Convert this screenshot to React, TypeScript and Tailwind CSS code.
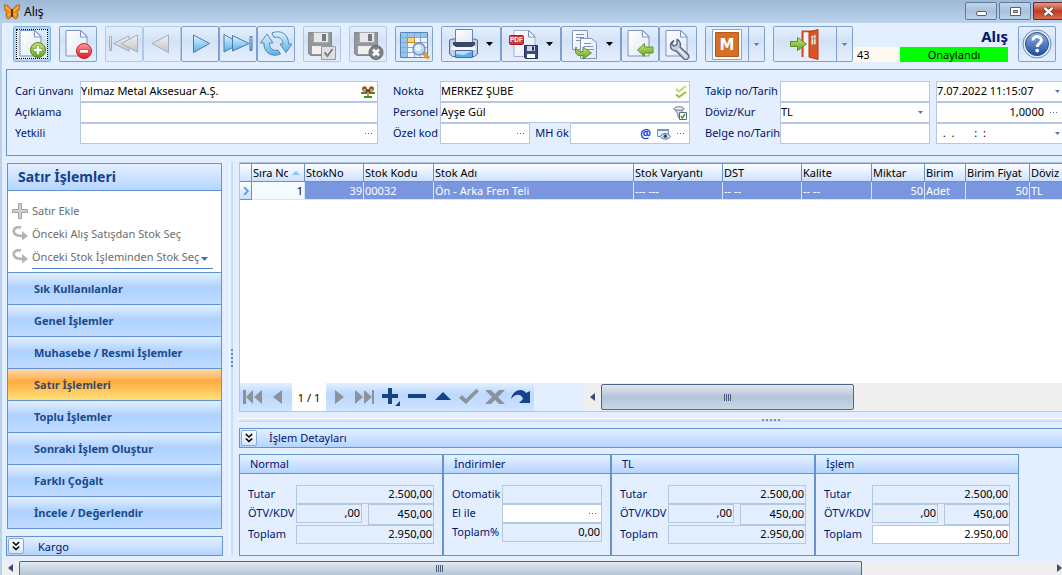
import type { ReactNode } from "react";

import clsx from "clsx";

/* ---------- toolbar icons ---------- */

function Gradients() {
  return (
    <svg aria-hidden="true" className="absolute size-0">
      <defs>
        <linearGradient id="paper" x1="0" x2="1" y1="0" y2="1">
          <stop offset="0" stopColor="#ffffff" />
          <stop offset="1" stopColor="#dfe8f5" />
        </linearGradient>
        <linearGradient id="blue" x1="0" x2="0" y1="0" y2="1">
          <stop offset="0" stopColor="#e4f4fd" />
          <stop offset="1" stopColor="#58b0e4" />
        </linearGradient>
        <linearGradient id="gray" x1="0" x2="0" y1="0" y2="1">
          <stop offset="0" stopColor="#f1f2f4" />
          <stop offset="1" stopColor="#c0c4ca" />
        </linearGradient>
        <linearGradient id="green" x1="0" x2="0" y1="0" y2="1">
          <stop offset="0" stopColor="#c8e878" />
          <stop offset="1" stopColor="#5fa31c" />
        </linearGradient>
        <linearGradient id="red" x1="0" x2="0" y1="0" y2="1">
          <stop offset="0" stopColor="#ff9a9a" />
          <stop offset="1" stopColor="#e01818" />
        </linearGradient>
        <linearGradient id="help" x1="0" x2="0" y1="0" y2="1">
          <stop offset="0" stopColor="#8fb4e6" />
          <stop offset="1" stopColor="#1f4c9f" />
        </linearGradient>
      </defs>
    </svg>
  );
}

function Icon({ children }: { children: ReactNode }) {
  return (
    <svg aria-hidden="true" className="size-8 shrink-0" fill="none" viewBox="0 0 32 32">
      {children}
    </svg>
  );
}

function Paper() {
  return (
    <>
      <path d="M4 2.5h15l6 6V28H4z" fill="url(#paper)" stroke="#7d93c4" />
      <path d="M18.5 2.5V9H25z" fill="#fff" stroke="#7d93c4" />
    </>
  );
}

function NewIcon() {
  return (
    <Icon>
      <Paper />
      <circle cx="22" cy="22" fill="url(#green)" r="7.5" stroke="#4d8a1c" />
      <path d="M20.5 17.5h3v3h3v3h-3v3h-3v-3h-3v-3h3z" fill="#fff" stroke="#5a9426" strokeWidth=".6" />
    </Icon>
  );
}

function DeleteIcon() {
  return (
    <Icon>
      <Paper />
      <circle cx="22" cy="23" fill="url(#red)" r="7.5" stroke="#cf1f2b" />
      <path d="M17.5 21.5h9V25h-9z" fill="#fff" stroke="#b8202a" strokeWidth=".6" />
    </Icon>
  );
}

function FirstIcon() {
  return (
    <Icon>
      <g fill="url(#gray)" stroke="#a9adb4">
        <path d="M1.5 8.5h2v14h-2z" />
        <path d="M21 8v15L5.5 15.5z" />
        <path d="M29.5 7v17L13 15.5z" />
      </g>
    </Icon>
  );
}

function PriorIcon() {
  return (
    <Icon>
      <path d="M22.5 7v17.5L6 15.5z" fill="url(#gray)" stroke="#a9adb4" />
    </Icon>
  );
}

function NextIcon() {
  return (
    <Icon>
      <path d="M9.5 7v17.5l16-9z" fill="url(#blue)" stroke="#4a78b4" />
    </Icon>
  );
}

function LastIcon() {
  return (
    <Icon>
      <g fill="url(#blue)" stroke="#4a78b4">
        <path d="M28 8.5h2v14h-2z" />
        <path d="M2 6.500V24l16-8.500z" />
        <path d="M10.5 7.5V23L27 15.5z" />
      </g>
    </Icon>
  );
}

function RefreshIcon() {
  return (
    <Icon>
      <g fill="url(#blue)" stroke="#5787b8">
        <path d="M12 5c9-4 17 2 16.500 11H32l-6 8.500L20 16h3c0-5-4-8-9-6.500z" />
        <path d="M20.500 26C11 30 3.500 24 4 15H.5L7 6l6 9H9.500c-.5 5 3.500 8.500 8.500 7z" />
      </g>
    </Icon>
  );
}

function GrayFloppy() {
  return (
    <>
      <path d="M2.5 4.5h23v23h-21l-2-2z" fill="#94979c" stroke="#85888e" />
      <path d="M7.5 4.5h15v10h-15z" fill="#e6e7e9" stroke="#a5a8ad" />
      <path d="M16 6h4v7h-4z" fill="#75787e" />
      <path d="M6 18h15v8H6z" fill="#f0f0f1" />
    </>
  );
}

function SaveIcon() {
  return (
    <Icon>
      <GrayFloppy />
      <path d="M15.5 18.5h14v13h-14z" fill="#dfe0e2" stroke="#97999d" />
      <path d="M18.500 24.500l3 3.500 5-7" stroke="#7d8086" strokeWidth="2" />
    </Icon>
  );
}

function CancelIcon() {
  return (
    <Icon>
      <GrayFloppy />
      <circle cx="24" cy="24.500" fill="#808287" r="7" stroke="#65686d" />
      <path d="M21 21.500l6 6m0-6l-6 6" stroke="#fff" strokeWidth="2.600" />
    </Icon>
  );
}

function GridSearchIcon() {
  return (
    <Icon>
      <path d="M2.500 4.500h27v25h-27z" fill="#f4f8fd" stroke="#5a83b5" />
      <path d="M3 5h26v4H3zM3 5h6v24H3z" fill="#8fc8ea" />
      <path d="M9.500 5v24M16.500 5v24M22.500 5v24M3 9.500h26M3 14.500h26M3 19.500h26M3 24.500h26" stroke="#8da4cf" />
      <path d="M9.500 9.500h7v5h-7z" fill="#ffd36b" stroke="#c98a1b" />
      <path d="M25 25l6 5.500" stroke="#dd9a36" strokeWidth="3.500" />
      <circle cx="21" cy="21" fill="#b4dcf7" r="6" stroke="#7f8fb8" strokeWidth="1.500" />
      <circle cx="20" cy="20" fill="#e6f5fe" r="3" />
    </Icon>
  );
}

function PrintIcon() {
  return (
    <Icon>
      <path d="M1.500 12l3-1h22l3 1v14l-3 2.500h-22l-3-2.500z" fill="#c3cde3" stroke="#5468a0" />
      <path d="M5 15h21l2 7H3z" fill="#f4f7fc" />
      <path d="M7.500 1.500h17v14h-17z" fill="url(#paper)" stroke="#6f80b4" />
      <path d="M5 14h22v3l-3 2H8l-3-2z" fill="#3c4868" />
      <path d="M7.500 22.500h17v7h-17z" fill="#58aee8" stroke="#5468a0" />
      <path d="M8 23h16l-8 4-8-1z" fill="#b8e0fa" />
    </Icon>
  );
}

function PdfIcon() {
  return (
    <Icon>
      <path d="M6 2.500h15l6 6V28.500H6z" fill="url(#paper)" stroke="#a2b0d0" />
      <path d="M20.500 2.500V9H27z" fill="#fff" stroke="#7d93c4" />
      <rect fill="#d0383c" height="9" rx="1" stroke="#a51d26" width="14" x="1.500" y="7.500" />
      <text fill="#fff" fontFamily="Liberation Sans, sans-serif" fontSize="6.500" fontWeight="700" x="2" y="14.400">
        PDF
      </text>
      <path d="M16.500 17.500h13v13h-12l-1-1z" fill="#3b4a78" stroke="#25325c" />
      <path d="M19 18h8v5h-8z" fill="#c8d4ec" />
      <path d="M24 18.500h2v4h-2z" fill="#25325c" />
      <path d="M19 26h8v4h-8z" fill="#fff" />
    </Icon>
  );
}

function CopyIcon() {
  return (
    <Icon>
      <path d="M4.500 2.500h15v19h-15z" fill="url(#paper)" stroke="#8093c4" />
      <path d="M8 6.500h8M8 9.500h8M8 12.500h5" stroke="#7f92bb" />
      <path d="M12.500 10.500h11l5 4v16h-16z" fill="url(#paper)" stroke="#8093c4" />
      <path d="M16 15.500h7M16 18.500h9M18 21.500h8" stroke="#7f92bb" />
      <path d="M8 19c0 4 3 5 7 4.500V19l8.500 6L15 31v-3.500c-6 1-9-2-7-8.500z" fill="url(#green)" stroke="#5d8f20" />
    </Icon>
  );
}

function ImportIcon() {
  return (
    <Icon>
      <Paper />
      <path d="M13.500 22l7-6.500V19H29v6h-8.500v3.500z" fill="url(#green)" stroke="#5a9426" />
    </Icon>
  );
}

function SettingsIcon() {
  return (
    <Icon>
      <Paper />
      <path
        d="M12 12.500c-5 2.500-5 10 2 10.500l8 8c2.500 2 6-1 4.500-4l-8.500-8c1.500-4-1-7-3-7.500v5l-3 1.500-2.500-2z"
        fill="#c3cddd"
        stroke="#54627f"
        strokeWidth="1.300"
      />
      <path d="M16 20.500l8.500 8.500" stroke="#eff3f8" strokeWidth="1.500" />
    </Icon>
  );
}

function MIcon() {
  return (
    <Icon>
      <path d="M1.500 1.500h29v30h-29z" fill="#fff" stroke="#8ba5d2" />
      <path d="M4.500 4.500h23v24h-23z" fill="#d46f25" stroke="#b5591a" />
      <text fill="#fff" fontFamily="DejaVu Sans, sans-serif" fontSize="15" fontWeight="700" textAnchor="middle" x="16" y="22">
        M
      </text>
    </Icon>
  );
}

function ExitIcon() {
  return (
    <Icon>
      <path d="M13.500 29V3.500H28V29" stroke="#d2471c" strokeWidth="2" />
      <path d="M15 4.500h12V28H15z" fill="#f3f4f8" />
      <path d="M20 4l9-2.500v30L20 29z" fill="#db5227" stroke="#b93a16" />
      <path d="M22 7.500l5-1v10l-5 .5z" fill="#e9e4d2" stroke="#c0613a" strokeWidth=".7" />
      <path d="M24.500 7v9.500M22 11l5-.5" stroke="#a1714f" strokeWidth=".7" />
      <path d="M1.500 13.500h7v-4l9 6.500-9 6.500v-4h-7z" fill="url(#green)" stroke="#5a9426" />
    </Icon>
  );
}

function HelpIcon() {
  return (
    <Icon>
      <circle cx="16" cy="16" fill="#e9f0fa" r="14" stroke="#6d87b5" />
      <circle cx="16" cy="16" fill="url(#help)" r="11.500" stroke="#24508f" />
      <path d="M11.800 12.500c.4-5.500 9-5 8.500.2-.3 2.800-4 2.800-4 6.300" stroke="#fff" strokeWidth="3" />
      <circle cx="16.200" cy="22.600" fill="#fff" r="1.900" />
    </Icon>
  );
}

function ButterflyIcon() {
  return (
    <svg aria-hidden="true" className="size-4" viewBox="0 0 16 16">
      <path d="M8 7C6 2 2 0 0 1c0 4 1 6 3 7-2 2-1 6 1 7 2 0 4-3 4-6z" fill="#f08c1a" stroke="#8a4f14" strokeWidth=".6" />
      <path d="M8 7c2-5 6-7 8-6 0 4-1 6-3 7 2 2 1 6-1 7-2 0-4-3-4-6z" fill="#f08c1a" stroke="#8a4f14" strokeWidth=".6" />
      <path d="M2 3l4 4M14 3l-4 4M4 12l2-3M12 12l-2-3" stroke="#ffc94d" />
      <path d="M8 5v8" stroke="#3a220c" strokeWidth="1.500" />
    </svg>
  );
}

/* ---------- small glyphs ---------- */

function Caret({ className }: { className?: string }) {
  return (
    <svg aria-hidden="true" className={clsx("shrink-0 fill-current", className)} preserveAspectRatio="none" viewBox="0 0 8 4">
      <path d="M0 0h8L4 4z" />
    </svg>
  );
}

function Dots() {
  return (
    <svg aria-hidden="true" className="h-px w-2 fill-[#4a6fae]" viewBox="0 0 8 1">
      <path d="M0 0h1v1H0zM3 0h1v1H3zM6 0h1v1H6z" />
    </svg>
  );
}

function Chevrons() {
  return (
    <svg aria-hidden="true" className="h-2.5 w-2" fill="none" stroke="#000" strokeWidth="1.600" viewBox="0 0 8 10">
      <path d="M.8 1L4 4l3.200-3M.8 5.500L4 8.500l3.200-3" />
    </svg>
  );
}

function PeopleIcon() {
  return (
    <svg aria-hidden="true" className="h-3 w-3.5" viewBox="0 0 14 12">
      <path d="M0 6h5v2H0zM9 6h5v2H9zM3 10h8v2H3z" fill="#3f8f2f" />
      <circle cx="3.500" cy="2.700" fill="#8c5a2c" r="2.500" />
      <circle cx="10.500" cy="2.700" fill="#8c5a2c" r="2.500" />
      <circle cx="7" cy="5.500" fill="#6d421d" r="2.600" />
      <path d="M2 3h3v3H2zM9 3h3v3H9zM6 6h2v4H6z" fill="#c9995e" />
    </svg>
  );
}

function ChecksIcon() {
  return (
    <svg aria-hidden="true" className="h-3.5 w-3" fill="none" strokeWidth="2" viewBox="0 0 12 14">
      <path d="M1 4l3 2.500L11 1" stroke="#b9dc6c" />
      <path d="M1 9.500L4 12l7-5" stroke="#8fc43a" />
    </svg>
  );
}

function FilterCheckIcon() {
  return (
    <svg aria-hidden="true" className="size-3.5" fill="none" viewBox="0 0 14 14">
      <path d="M1 2.500L5 8v3l2 1V8l4-5.500z" fill="#dcdfe6" stroke="#6b7384" />
      <ellipse cx="6" cy="2.500" fill="#f4f5f8" rx="5" ry="1.700" stroke="#6b7384" />
      <path d="M6.500 6.500h7v7h-7z" fill="#fff" stroke="#5a6a8c" />
      <path d="M8 10l1.500 2L12 8" stroke="#3fa12c" strokeWidth="1.500" />
    </svg>
  );
}

function WindowEyeIcon() {
  return (
    <svg aria-hidden="true" className="h-3 w-3.5" fill="none" viewBox="0 0 14 12">
      <path d="M.5 1.500h11v7H.5z" fill="#e8f2fc" stroke="#6d9bc8" />
      <path d="M0 1h12v2H0z" fill="#6d9bc8" />
      <path d="M3 8.500c2.500-4 8-4 10.500 0-2.500 3.500-8 3.500-10.500 0z" fill="#dbe4f0" stroke="#54698f" />
      <circle cx="8.300" cy="8.300" fill="#2f4a78" r="1.800" />
    </svg>
  );
}

function ReturnIcon() {
  return (
    <svg aria-hidden="true" className="size-4 shrink-0" fill="none" viewBox="0 0 16 16">
      <path d="M9 1.500C4 0 1 3.500 2 6.500 3 9.500 7 10 11 10" stroke="#b3b3b3" strokeWidth="2.600" />
      <path d="M10 5l6 5-6 4.500z" fill="#b3b3b3" />
    </svg>
  );
}

/* ---------- controls ---------- */

const TOOL =
  "flex h-9 items-center border border-[#7f9fd0] bg-linear-to-b from-[#e6f0fc] from-0% via-[#d2e2f6] via-40% to-[#e4effd] rounded-xs";

function ToolButton({
  label,
  children,
  menu,
  disabled,
  active,
}: {
  label: string;
  children: ReactNode;
  menu?: boolean;
  disabled?: boolean;
  active?: boolean;
}) {
  return (
    <button
      aria-label={label}
      className={clsx(
        TOOL,
        "shrink-0",
        menu ? "w-15 gap-1.5 pl-1.5" : "w-[38px] justify-center",
        disabled && "border-[#b3c8e6]",
        active && "border-[#7fb0dc] outline-1 -outline-offset-4 outline-dotted outline-black ring-2 ring-[#b0d8f4] ring-inset",
      )}
      disabled={disabled}
      type="button"
    >
      {children}
      {menu && <Caret className="h-1 w-[7px] text-black" />}
    </button>
  );
}

function SplitButton({ label, className, children }: { label: string; className: string; children: ReactNode }) {
  return (
    <div className={clsx(TOOL, "shrink-0", className)}>
      <button aria-label={label} className="flex h-full flex-1 items-center justify-center" type="button">
        {children}
      </button>
      <button
        aria-label={`${label} menu`}
        className="flex h-full w-4 items-center justify-center border-[#7f9fd0] border-l"
        type="button"
      >
        <Caret className="h-[3px] w-[5px] text-[#4c7bbd]" />
      </button>
    </div>
  );
}

function Field({
  id,
  label,
  value,
  className,
  right,
  children,
}: {
  id: string;
  label?: string;
  value?: string;
  className?: string;
  right?: boolean;
  children?: ReactNode;
}) {
  return (
    <div className={clsx("flex h-[21px] min-w-0 items-center border border-[#b4c8e6] bg-white", className)}>
      <input
        aria-label={label}
        className={clsx("h-full w-0 min-w-0 flex-1 pb-0.5 text-black outline-none", right && "text-right")}
        defaultValue={value}
        id={id}
        type="text"
      />
      {children && <span className="flex shrink-0 items-center gap-1.5 pr-0.5 pl-1.5">{children}</span>}
    </div>
  );
}

function DotsButton({ label }: { label: string }) {
  return (
    <button aria-label={label} className="flex h-4 items-center pr-0.5" type="button">
      <Dots />
    </button>
  );
}

function ExpandButton({ label }: { label: string }) {
  return (
    <button
      aria-label={label}
      className="flex size-4 items-center justify-center rounded-xs border border-[#8ba9d6] bg-linear-to-b from-white to-[#d5e4f8]"
      type="button"
    >
      <Chevrons />
    </button>
  );
}

function Header() {
  return (
    <header className="flex h-[23px] shrink-0 items-start bg-linear-to-b from-[#9db7d5] to-[#bad2ec]">
      <div className="flex h-full items-center gap-1 pl-1 text-black text-xs">
        <ButterflyIcon />
        <span>Alış</span>
      </div>
      <div className="ml-auto flex gap-0.5 pt-0.5">
        <button
          aria-label="Simge durumuna küçült"
          className="flex h-[18px] w-8 items-center justify-center rounded-xs border border-[#5e7ba0] bg-linear-to-b from-[#c3d5ea] via-[#a9c0da] to-[#bdd3ec]"
          type="button"
        >
          <span className="mt-1 h-[5px] w-[11px] rounded-xs border border-[#56606e] bg-white" />
        </button>
        <button
          aria-label="Ekranı kapla"
          className="flex h-[18px] w-8 items-center justify-center rounded-xs border border-[#5e7ba0] bg-linear-to-b from-[#c3d5ea] via-[#a9c0da] to-[#bdd3ec]"
          type="button"
        >
          <svg aria-hidden="true" className="h-[9px] w-[11px]" viewBox="0 0 11 9">
            <path d="M.5.5h10v8H.5z" fill="#fff" stroke="#56606e" />
            <path d="M3.500 3.500h4v2h-4z" fill="#a9c0da" stroke="#56606e" />
          </svg>
        </button>
        <button
          aria-label="Kapat"
          className="flex h-[18px] w-[29px] items-center justify-center rounded-l-xs border border-[#6b2a22] border-r-0 bg-linear-to-b from-[#dd9a8c] via-[#c03a22] to-[#d9694c]"
          type="button"
        >
          <svg aria-hidden="true" className="h-[9px] w-[11px]" viewBox="0 0 11 9">
            <path d="M1.500 1l8 7m0-7l-8 7" stroke="#5c2a2a" strokeWidth="4" />
            <path d="M1.500 1l8 7m0-7l-8 7" stroke="#fff" strokeWidth="2.400" />
          </svg>
        </button>
      </div>
    </header>
  );
}

function Toolbar() {
  return (
    <div className="flex shrink-0 items-start gap-2 pt-[3px] pr-1.5 pb-[7px] pl-[11px]">
      <ToolButton active label="Yeni">
        <NewIcon />
      </ToolButton>
      <ToolButton label="Sil">
        <DeleteIcon />
      </ToolButton>
      <div className="flex">
        <ToolButton disabled label="İlk">
          <FirstIcon />
        </ToolButton>
        <ToolButton disabled label="Önceki">
          <PriorIcon />
        </ToolButton>
        <ToolButton label="Sonraki">
          <NextIcon />
        </ToolButton>
        <ToolButton label="Son">
          <LastIcon />
        </ToolButton>
        <ToolButton label="Yenile">
          <RefreshIcon />
        </ToolButton>
      </div>
      <ToolButton disabled label="Kaydet">
        <SaveIcon />
      </ToolButton>
      <ToolButton disabled label="Vazgeç">
        <CancelIcon />
      </ToolButton>
      <ToolButton label="Listele">
        <GridSearchIcon />
      </ToolButton>
      <div className="flex">
        <ToolButton label="Yazdır" menu>
          <PrintIcon />
        </ToolButton>
        <ToolButton label="PDF kaydet" menu>
          <PdfIcon />
        </ToolButton>
        <ToolButton label="Kopyala" menu>
          <CopyIcon />
        </ToolButton>
        <ToolButton label="İçeri al">
          <ImportIcon />
        </ToolButton>
        <ToolButton label="Ayarlar">
          <SettingsIcon />
        </ToolButton>
      </div>
      <SplitButton className="w-15" label="Mikro">
        <MIcon />
      </SplitButton>
      <SplitButton className="w-20" label="Çıkış">
        <ExitIcon />
      </SplitButton>
      <div className="-ml-2 flex min-w-0 flex-1 flex-col">
        <h1 className="h-[21px] text-right font-bold text-[#00156e] text-[15px] leading-[21px]">Alış</h1>
        <div className="flex h-[15px] gap-0.5 text-black leading-[15px]">
          <span className="w-[45px] bg-[#fffaf0] pl-1">43</span>
          <span className="flex-1 bg-[#00ff00] text-center">Onaylandı</span>
        </div>
      </div>
      <div className="pl-0.5">
        <ToolButton label="Yardım">
          <HelpIcon />
        </ToolButton>
      </div>
    </div>
  );
}

function DocumentForm() {
  return (
    <form className="ml-1 grid shrink-0 grid-cols-[65px_298fr_62px_250fr_90px_150fr_132fr] items-center whitespace-nowrap border border-[#6593cf] border-r-0 py-[11px] pl-2">
      <label className="pb-0.5" htmlFor="cari">
        Cari ünvanı
      </label>
      <Field id="cari" value="Yılmaz Metal Aksesuar A.Ş.">
        <PeopleIcon />
      </Field>
      <label className="pb-0.5 pl-[15px]" htmlFor="nokta">
        Nokta
      </label>
      <Field id="nokta" value="MERKEZ ŞUBE">
        <ChecksIcon />
      </Field>
      <label className="pb-0.5 pl-[15px]" htmlFor="takip">
        Takip no/Tarih
      </label>
      <Field id="takip" />
      <Field className="ml-1.5 border-r-0" id="takip-tarih" label="Takip tarihi" value="7.07.2022 11:15:07">
        <Caret className="h-[3px] w-[5px] text-[#4c7bbd]" />
      </Field>

      <label className="pb-0.5" htmlFor="aciklama">
        Açıklama
      </label>
      <Field id="aciklama" />
      <label className="pb-0.5 pl-[15px]" htmlFor="personel">
        Personel
      </label>
      <Field id="personel" value="Ayşe Gül">
        <FilterCheckIcon />
      </Field>
      <label className="pb-0.5 pl-[15px]" htmlFor="doviz">
        Döviz/Kur
      </label>
      <div className="relative flex h-[21px] items-center border border-[#b4c8e6] bg-white">
        <select className="h-full w-full appearance-none pb-0.5 text-black outline-none" defaultValue="TL" id="doviz">
          <option>TL</option>
        </select>
        <Caret className="pointer-events-none absolute right-1.5 h-[3px] w-[5px] text-[#4c7bbd]" />
      </div>
      <Field className="ml-1.5 border-r-0" id="kur" label="Kur" right value="1,0000">
        <DotsButton label="Kur seç" />
      </Field>

      <label className="pb-0.5" htmlFor="yetkili">
        Yetkili
      </label>
      <Field id="yetkili">
        <DotsButton label="Yetkili seç" />
      </Field>
      <label className="pb-0.5 pl-[15px]" htmlFor="ozel-kod">
        Özel kod
      </label>
      <div className="flex items-center">
        <Field className="flex-3" id="ozel-kod">
          <DotsButton label="Özel kod seç" />
        </Field>
        <label className="w-10 pb-0.5 pl-[5px]" htmlFor="mh-ok">
          MH ök
        </label>
        <Field className="flex-4" id="mh-ok">
          <span className="font-bold text-[#1f3fe0] text-xs">@</span>
          <WindowEyeIcon />
          <DotsButton label="MH özel kod seç" />
        </Field>
      </div>
      <label className="pb-0.5 pl-[15px]" htmlFor="belge">
        Belge no/Tarih
      </label>
      <Field id="belge" />
      <Field className="ml-1.5 border-r-0" id="belge-tarih" label="Belge tarihi" value="  .  .       :  :">
        <Caret className="h-[3px] w-[5px] text-[#4c7bbd]" />
      </Field>
    </form>
  );
}

const GROUPS = [
  "Sık Kullanılanlar",
  "Genel İşlemler",
  "Muhasebe / Resmi İşlemler",
  "Satır İşlemleri",
  "Toplu İşlemler",
  "Sonraki İşlem Oluştur",
  "Farklı Çoğalt",
  "İncele / Değerlendir",
];

function Sidebar() {
  return (
    <aside className="flex w-[217px] shrink-0 flex-col gap-[7px] pt-[7px]">
      <nav className="mx-px border border-[#6593cf]">
        <h2 className="h-[27px] border-[#6593cf] border-b bg-linear-to-b from-[#e4efff] to-[#b4d5ff] pl-2.5 font-bold text-[#15428b] text-sm leading-[26px]">
          Satır İşlemleri
        </h2>
        <ul className="h-[81px] bg-white pt-2 text-[#6d6d6d]">
          <li>
            <button className="flex h-[23px] w-full items-center gap-1 pl-1" type="button">
              <svg aria-hidden="true" className="size-4 shrink-0" viewBox="0 0 16 16">
                <path d="M6.500.5h3v6h6v3h-6v6h-3v-6h-6v-3h6z" fill="#d4d4d4" stroke="#a0a0a0" />
              </svg>
              Satır Ekle
            </button>
          </li>
          <li>
            <button className="flex h-[23px] w-full items-center gap-1 pl-1" type="button">
              <ReturnIcon />
              Önceki Alış Satışdan Stok Seç
            </button>
          </li>
          <li>
            <button className="flex h-6 w-full items-center gap-1 whitespace-nowrap pl-1" type="button">
              <ReturnIcon />
              <span className="mr-2 flex h-full flex-1 items-center gap-0.5 border-[#4c84d0] border-b">
                Önceki Stok İşleminden Stok Seç
                <Caret className="mt-1 h-1 w-[7px] text-[#3f6fb8]" />
              </span>
            </button>
          </li>
        </ul>
        {GROUPS.map((name) => (
          <button
            className={clsx(
              "block h-8 w-full border-[#6593cf] border-t bg-linear-to-b pl-[26px] text-left font-bold",
              name === "Satır İşlemleri"
                ? "from-[#ffd9aa] from-0% via-[#ffab3f] via-40% to-[#fee17a] text-[#3a4a6a]"
                : "from-[#e3efff] from-0% via-[#afd2ff] via-45% to-[#c0dbff] text-[#1b4a8c]",
            )}
            key={name}
            type="button"
          >
            {name}
          </button>
        ))}
      </nav>
      <div className="flex h-5 items-center gap-3.5 border border-[#6593cf] bg-linear-to-b from-[#e4efff] to-[#b4d5ff] pl-px">
        <ExpandButton label="Kargo aç" />
        <span>Kargo</span>
      </div>
    </aside>
  );
}

const COLUMNS = [
  { title: "Sıra No", value: "1", width: "w-[53px]", num: true },
  { title: "StokNo", value: "39", width: "w-[59px]", num: true },
  { title: "Stok Kodu", value: "00032", width: "w-[70px]" },
  { title: "Stok Adı", value: "Ön - Arka Fren Teli", width: "w-[200px]" },
  { title: "Stok Varyantı", value: "--- ---", width: "w-[89px]" },
  { title: "DST", value: "-- --", width: "w-[79px]" },
  { title: "Kalite", value: "-- --", width: "w-[70px]" },
  { title: "Miktar", value: "50", width: "w-[53px]", num: true },
  { title: "Birim", value: "Adet", width: "w-[41px]" },
  { title: "Birim Fiyat", value: "50", width: "w-16", num: true },
  { title: "Döviz", value: "TL", width: "w-auto" },
];

function StockTable() {
  return (
    <table className="w-full table-fixed border-separate border-spacing-0 text-black">
      <thead>
        <tr className="h-[19px] bg-linear-to-b from-white to-[#c9e0ff]">
          <th aria-label="Seçim" className="w-3 border-[#6593cf] border-y border-r p-0" />
          {COLUMNS.map((col, i) => (
            <th
              className={clsx(
                "overflow-hidden whitespace-nowrap border-[#6593cf] border-y border-r p-0 pl-px text-left font-normal leading-4 last:border-r-0",
                col.width,
              )}
              key={col.title}
            >
              {i === 0 ? (
                <span className="flex items-center justify-between pr-1">
                  <span className="w-[35px] overflow-hidden">{col.title}</span>
                  <Caret className="h-1 w-2 rotate-180 text-[#8fc0f5]" />
                </span>
              ) : (
                col.title
              )}
            </th>
          ))}
        </tr>
      </thead>
      <tbody>
        <tr className="h-[18px]">
          <td className="border-[#6593cf] border-r border-b bg-linear-to-b from-white to-[#c9e0ff] p-0">
            <svg aria-hidden="true" className="mx-auto h-2 w-1.5" fill="none" viewBox="0 0 6 8">
              <path d="M1 0l4 4-4 4" stroke="#5f9be6" strokeWidth="1.800" />
            </svg>
          </td>
          {COLUMNS.map((col, i) => (
            <td
              className={clsx(
                "overflow-hidden whitespace-nowrap border-[#d5e6fb] border-r border-b p-0 px-px last:border-r-0",
                i === 0 ? "bg-[#f5faff]" : "bg-[#7a96df] text-white",
                col.num && "text-right",
              )}
              key={col.title}
            >
              {col.value}
            </td>
          ))}
        </tr>
      </tbody>
    </table>
  );
}

function NavButton({ label, on, children }: { label: string; on?: boolean; children: ReactNode }) {
  return (
    <button
      aria-label={label}
      className={clsx("flex h-full w-[26px] items-center justify-center", on ? "text-[#15428b]" : "text-[#8d929a]")}
      type="button"
    >
      <svg aria-hidden="true" className="size-5" fill="currentColor" viewBox="0 0 20 20">
        {children}
      </svg>
    </button>
  );
}

function Grip() {
  return (
    <svg aria-hidden="true" className="h-[7px] w-2" viewBox="0 0 8 7">
      <path d="M.5 0v7M2.500 0v7M4.500 0v7M6.500 0v7" stroke="#4b5a7c" />
    </svg>
  );
}

function Navigator() {
  return (
    <div className="flex h-7 shrink-0 bg-[#e3efff]">
      <div className="flex shrink-0 bg-linear-to-b from-[#e3efff] from-0% via-[#bcd8fd] via-40% to-[#cfe3fe]">
        <NavButton label="İlk kayıt">
          <path d="M0 3h3v14H0zM10 3v14l-7-7zM19 3v14l-8-7z" />
        </NavButton>
        <NavButton label="Önceki kayıt">
          <path d="M13 3v14l-9-7z" />
        </NavButton>
        <span className="flex w-[34px] items-center justify-center bg-white text-black">1 / 1</span>
        <NavButton label="Sonraki kayıt">
          <path d="M6 3v14l9-7z" />
        </NavButton>
        <NavButton label="Son kayıt">
          <path d="M17 3h2v14h-2zM9 3v14l8-7zM0 3v14l8-7z" />
        </NavButton>
        <NavButton label="Ekle" on>
          <path d="M7 1h4v6h6v4h-6v6H7v-6H1V7h6zM19 14v5h-5z" />
        </NavButton>
        <NavButton label="Çıkar" on>
          <path d="M1 7h18v4H1z" />
        </NavButton>
        <NavButton label="Düzenle" on>
          <path d="M10 5l8 8H2z" />
        </NavButton>
        <NavButton label="Onayla">
          <path d="M0 11l3-3 4 4L17 2l3 2L7 17z" />
        </NavButton>
        <NavButton label="İptal">
          <path d="M0 3h6l4 4 4-4h6l-7 7 7 7h-6l-4-4-4 4H0l7-7z" />
        </NavButton>
        <NavButton label="Tazele" on>
          <path d="M0 12C2 2 12 1 15 6l4-2v12H8l4-4C10 6 4 7 0 12z" />
        </NavButton>
      </div>
      <div className="ml-[50px] flex min-w-0 flex-1 items-center bg-[#efefef] py-px">
        <button aria-label="Sola kaydır" className="flex w-[17px] shrink-0 justify-center text-[#3d4c70]" type="button">
          <svg aria-hidden="true" className="h-2 w-[5px] fill-current" viewBox="0 0 5 8">
            <path d="M5 0v8L0 4z" />
          </svg>
        </button>
        <div className="flex h-full w-[53%] items-center justify-center rounded-xs border border-[#51648f] bg-linear-to-b from-[#e3e9ef] from-0% via-[#b4c4d8] via-50% to-[#c8d6e6]">
          <Grip />
        </div>
      </div>
    </div>
  );
}

function Amount({ id, label, value, className }: { id: string; label?: string; value?: string; className?: string }) {
  return (
    <input
      aria-label={label}
      className={clsx(
        "w-0 min-w-0 flex-1 border border-[#b4c8e6] pr-px pb-0.5 text-right text-black outline-none",
        className ?? "h-[19px]",
      )}
      defaultValue={value}
      id={id}
      type="text"
    />
  );
}

function Box({ title, className, children }: { title: string; className: string; children: ReactNode }) {
  return (
    <fieldset className={clsx("flex min-w-0 shrink-0 flex-col border border-[#6593cf]", className)}>
      <div className="h-[19px] shrink-0 border-[#6593cf] border-b bg-linear-to-b from-[#e9f2ff] to-[#b4d5ff] pl-2.5 leading-[18px]">
        {title}
      </div>
      <div className="pt-[11px] pr-2 pb-[11px] pl-2">{children}</div>
    </fieldset>
  );
}

function TotalsBox({ id, title, editable }: { id: string; title: string; editable?: boolean }) {
  return (
    <Box className="w-[204px]" title={title}>
      <div className="flex h-[19px] items-start">
        <label className="w-12 leading-[17px]" htmlFor={`${id}-tutar`}>
          Tutar
        </label>
        <Amount id={`${id}-tutar`} value="2.500,00" />
      </div>
      <div className="flex h-[21px] items-start">
        <label className="w-12 leading-[17px]" htmlFor={`${id}-otv`}>
          ÖTV/KDV
        </label>
        <Amount id={`${id}-otv`} value=",00" />
        <Amount className="ml-1.5 h-[21px]" id={`${id}-kdv`} label="KDV" value="450,00" />
      </div>
      <div className="flex h-[19px] items-start">
        <label className="w-12 leading-[17px]" htmlFor={`${id}-toplam`}>
          Toplam
        </label>
        <Amount className={editable ? "h-[19px] bg-white" : "h-[19px]"} id={`${id}-toplam`} value="2.950,00" />
      </div>
    </Box>
  );
}

function DiscountBox() {
  return (
    <Box className="w-[168px]" title="İndirimler">
      <div className="flex h-[19px] items-start">
        <label className="w-[50px] leading-[17px]" htmlFor="otomatik">
          Otomatik
        </label>
        <Amount id="otomatik" />
      </div>
      <div className="flex h-[19px] items-start">
        <label className="w-[50px] leading-[17px]" htmlFor="el-ile">
          El ile
        </label>
        <div className="flex h-[19px] flex-1 items-center border border-[#b4c8e6] bg-white pr-0.5">
          <input className="w-0 flex-1 outline-none" id="el-ile" type="text" />
          <DotsButton label="İndirim seç" />
        </div>
      </div>
      <div className="flex h-[19px] items-start">
        <label className="w-[50px] leading-[17px]" htmlFor="toplam-yuzde">
          Toplam%
        </label>
        <Amount id="toplam-yuzde" value="0,00" />
      </div>
    </Box>
  );
}

export default function App() {
  return (
    <div className="flex h-screen min-h-[520px] flex-col overflow-hidden bg-[#e3efff] font-['Noto_Sans',sans-serif] text-[#00156e] text-[11px] leading-[15px]">
      <Gradients />
      <Header />
      <div className="flex min-h-0 flex-1 flex-col border-[#b9d1ea] border-l-2">
        <Toolbar />
        <DocumentForm />

        <main className="flex min-h-0 flex-1 pl-1">
          <Sidebar />
          <div className="my-1.5 ml-1.5 flex w-1 shrink-0 items-center justify-center border-white border-l bg-linear-to-r from-[#e3efff] to-[#bcd9fb]">
            <svg aria-hidden="true" className="h-5 w-0.5 fill-[#5b8fd8]" viewBox="0 0 2 20">
              <path d="M0 0h2v2H0zM0 4h2v2H0zM0 8h2v2H0zM0 12h2v2H0zM0 16h2v2H0z" />
            </svg>
          </div>
          <div className="flex min-w-0 flex-1 flex-col pt-1.5 pb-[5px] pl-1.5">
            <section className="flex min-h-0 flex-1 flex-col border border-[#b4c8e6] border-r-0 bg-white">
              <div className="min-h-0 flex-1">
                <StockTable />
              </div>
              <Navigator />
            </section>
            <div className="mt-1.5 mb-1.5 flex h-1 shrink-0 justify-center border-white border-t bg-linear-to-b from-[#e3efff] to-[#bcd9fb] pl-60">
              <svg aria-hidden="true" className="h-0.5 w-[18px] fill-[#5b8fd8]" viewBox="0 0 18 2">
                <path d="M0 0h2v2H0zM4 0h2v2H4zM8 0h2v2H8zM12 0h2v2h-2zM16 0h2v2h-2z" />
              </svg>
            </div>
            <div className="flex h-5 shrink-0 items-center gap-3 border border-[#6593cf] border-r-0 bg-linear-to-b from-[#e4efff] to-[#b4d5ff] pl-px">
              <ExpandButton label="İşlem detayları aç" />
              <span className="pb-px">İşlem Detayları</span>
            </div>
            <div className="mt-1.5 flex shrink-0">
              <TotalsBox id="normal" title="Normal" />
              <DiscountBox />
              <TotalsBox id="tl" title="TL" />
              <TotalsBox editable id="islem" title="İşlem" />
            </div>
          </div>
        </main>

        <div className="flex h-3.5 shrink-0 items-center bg-[#efefef]">
          <button aria-label="Sola" className="flex w-[17px] shrink-0 justify-center text-[#3d4c70]" type="button">
            <svg aria-hidden="true" className="h-2 w-[5px] fill-current" viewBox="0 0 5 8">
              <path d="M5 0v8L0 4z" />
            </svg>
          </button>
          <div className="flex h-full flex-21 items-center justify-center rounded-t-xs border border-[#51648f] border-b-0 bg-linear-to-b from-[#e3e9ef] to-[#b4c4d8]">
            <Grip />
          </div>
          <div className="flex flex-5 justify-end">
            <button aria-label="Sağa" className="text-[#3d4c70]" type="button">
              <svg aria-hidden="true" className="h-2 w-[5px] fill-current" viewBox="0 0 5 8">
                <path d="M0 0v8l5-4z" />
              </svg>
            </button>
          </div>
        </div>
      </div>
    </div>
  );
}
